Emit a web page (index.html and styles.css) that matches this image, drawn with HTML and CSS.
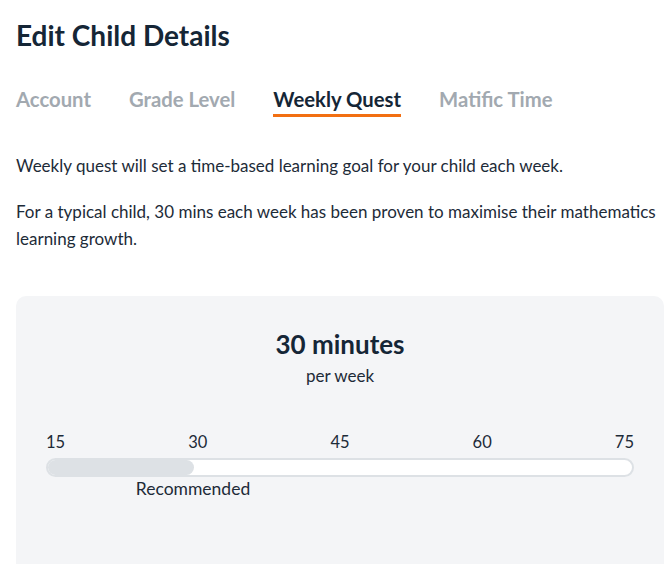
FILE: index.html
```html
<!DOCTYPE html>
<html>
<head>
<meta charset="utf-8">
<link rel="stylesheet" href="styles.css">
</head>
<body>
<div class="page">
  <h1 class="title">Edit Child Details</h1>
  <nav class="tabs">
    <span class="tab">Account</span>
    <span class="tab">Grade Level</span>
    <span class="tab active">Weekly Quest</span>
    <span class="tab">Matific Time</span>
  </nav>
  <p class="text">Weekly quest will set a time-based learning goal for your child each week.</p>
  <p class="text">For a typical child, 30 mins each week has been proven to maximise their mathematics learning growth.</p>
  <section class="card">
    <div class="amount">30 minutes</div>
    <div class="per">per week</div>
    <div class="scale">
      <span>15</span><span>30</span><span>45</span><span>60</span><span>75</span>
    </div>
    <div class="bar"><div class="fill" style="width:25%"></div></div>
    <div class="rec-row"><span class="rec" style="left:25%">Recommended</span></div>
  </section>
</div>
</body>
</html>
```

FILE: styles.css
```css
html, body {
  margin: 0;
  padding: 0;
  background: #ffffff;
}
body {
  font-family: Lato, "Noto Sans", sans-serif;
  color: #1d2b38;
}
.page {
  padding: 18px 4px 0 16px;
}
.title {
  margin: 0;
  font-size: 28px;
  font-weight: 700;
  line-height: 34px;
  color: #152636;
}
.tabs {
  display: flex;
  gap: 38px;
  margin-top: 34px;
}
.tab {
  font-size: 20.3px;
  font-weight: 700;
  color: #a2a9b0;
  line-height: 26px;
  padding-bottom: 2px;
  border-bottom: 3px solid transparent;
}
.tab.active {
  color: #152636;
  border-bottom-color: #f26f12;
}
.text {
  font-size: 17px;
  line-height: 27px;
  margin: 0;
}
.tabs + .text {
  margin-top: 35px;
}
.text + .text {
  margin-top: 19px;
}
.card {
  margin-top: 44px;
  background: #f4f5f7;
  border-radius: 10px;
  padding: 33px 30px 80px;
}
.amount {
  text-align: center;
  font-size: 26px;
  font-weight: 700;
  line-height: 30px;
  color: #152636;
}
.per {
  text-align: center;
  font-size: 17px;
  line-height: 22px;
  margin-top: 6px;
}
.scale {
  display: flex;
  justify-content: space-between;
  margin-top: 44px;
  font-size: 16.5px;
  line-height: 22px;
}
.bar {
  margin-top: 5px;
  height: 19px;
  box-sizing: border-box;
  border: 2px solid #dde1e5;
  background: #ffffff;
  border-radius: 10px;
  overflow: hidden;
}
.fill {
  height: 100%;
  background: #dde1e5;
  border-radius: 0 8px 8px 0;
}
.rec-row {
  position: relative;
  height: 24px;
}
.rec {
  position: absolute;
  top: 1px;
  transform: translateX(-50%);
  font-size: 17.5px;
  line-height: 22px;
  white-space: nowrap;
}
```
